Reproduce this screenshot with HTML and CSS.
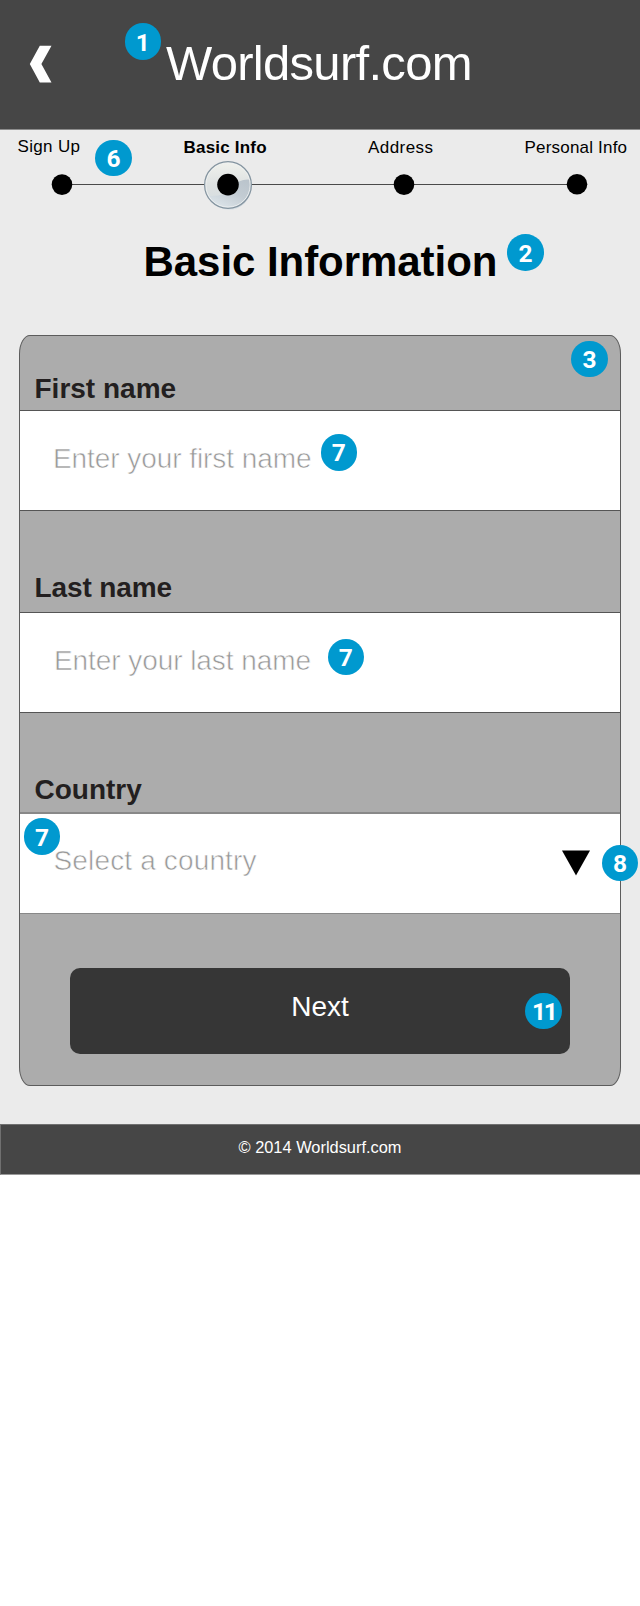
FILE: index.html
```html
<!DOCTYPE html>
<html lang="en">
<head>
<meta charset="utf-8">
<title>Worldsurf.com - Basic Information</title>
<link rel="stylesheet" href="styles.css">
</head>
<body>
<main class="screen">
  <header class="header">
    <svg class="back" width="22" height="38" viewBox="0 0 22 38"><path d="M9.800 .8H21.500L11.400 19.100 21.500 37.400H9.800L-.2 19.100Z" fill="#fff"/></svg>
    <div class="brand">Worldsurf.com</div>
  </header>
  <nav class="steps">
    <div class="step-labels">
      <span class="step first">Sign Up</span>
      <span class="step current">Basic Info</span>
      <span class="step address">Address</span>
      <span class="step">Personal Info</span>
    </div>
    <svg class="track" width="640" height="52" viewBox="0 0 640 52">
      <defs>
        <linearGradient id="glass" x1="0" y1="0" x2="0" y2="1">
          <stop offset="0" stop-color="#f1f2ed"/><stop offset=".5" stop-color="#dde1e1"/><stop offset="1" stop-color="#d5dce0"/>
        </linearGradient>
        <linearGradient id="shade" x1="1" y1="0" x2=".35" y2="1">
          <stop offset="0" stop-color="#b9c3cb"/><stop offset=".5" stop-color="#c3ccd3"/><stop offset="1" stop-color="#dde5ea"/>
        </linearGradient>
      </defs>
      <path d="M62 26.500H577" stroke="#4a4a4a"/>
      <circle cx="228" cy="27" r="23.400" fill="url(#glass)"/>
      <path d="M208.500 38Q226 39 233 29 238 21 249.300 21.500A22 22 0 0 1 208.500 38Z" fill="url(#shade)"/>
      <circle cx="228" cy="27" r="22.200" fill="none" stroke="#eef1f1" stroke-width=".9"/>
      <circle cx="228" cy="27" r="23.400" fill="none" stroke="#8494a0" stroke-width="1.200"/>
      <circle cx="62" cy="26.600" r="10.300"/><circle cx="228" cy="26.600" r="10.800"/><circle cx="404" cy="26.600" r="10.300"/><circle cx="577" cy="26.300" r="10.300"/>
    </svg>
  </nav>
  <h1 class="heading">Basic Information</h1>
  <form class="panel">
    <div class="label label-first">First name</div>
    <div class="field"><span class="hint">Enter your first name</span></div>
    <div class="label label-last">Last name</div>
    <div class="field field-last"><span class="hint">Enter your last name</span></div>
    <div class="label label-country">Country</div>
    <div class="field field-country"><span class="hint">Select a country</span>
      <svg class="arrow" width="28" height="26" viewBox="0 0 28 26"><path d="M0 .5H28L14 25.500Z"/></svg>
    </div>
    <div class="next">Next</div>
  </form>
  <footer class="footer">© 2014 Worldsurf.com</footer>
  <span class="badge b1">1</span>
  <span class="badge b6">6</span>
  <span class="badge b2">2</span>
  <span class="badge b3">3</span>
  <span class="badge b7a">7</span>
  <span class="badge b7b">7</span>
  <span class="badge b7c">7</span>
  <span class="badge b8">8</span>
  <span class="badge b11">11</span>
</main>
</body>
</html>
```
FILE: styles.css
```css
* { box-sizing: border-box; }
body { margin: 0; background: #fff; min-height: 1606px; font-family: "Liberation Sans", Arial, sans-serif; }
.screen { position: relative; width: 640px; height: 1175px; background: #ebebeb; color: #000; white-space: nowrap; overflow: hidden; }
.header { display: flex; align-items: center; height: 130px; padding: 0 0 4px 30px; background: #464646; border-bottom: 1px solid #8c8c8c; }
.back { flex: none; margin-top: 3px; overflow: visible; }
.brand { margin-left: 114px; font-size: 49px; line-height: 56px; letter-spacing: -.7px; color: #fff; }
.steps { height: 82px; padding-top: 8px; }
.step-labels { display: grid; grid-template-columns: 166px 184.500px 156.500px 116px; height: 20px; padding-left: 17.500px; }
.step { font-size: 17px; line-height: 20px; letter-spacing: .2px; }
.first { margin-top: -1px; letter-spacing: .35px; }
.address { letter-spacing: .45px; }
.current { font-weight: bold; }
.track { display: block; }
.heading { margin: 26px 0 0; padding-left: 143.500px; font-size: 42px; line-height: 48px; height: 97px; letter-spacing: -.05px; }
.panel { margin-left: 19px; width: 602px; height: 751px; background: #acacac; border: 1px solid #5c5c5c; border-radius: 11px / 19px; }
.label { display: flex; align-items: flex-end; padding-left: 14.500px; font-size: 28px; line-height: 32px; font-weight: bold; color: #231f20; }
.label-first { height: 74px; padding-bottom: 5px; }
.label-last { height: 101px; padding-bottom: 8px; letter-spacing: -.1px; }
.label-country { height: 99px; padding-bottom: 6px; }
.field { display: flex; align-items: center; justify-content: space-between; height: 101px; padding: 0 31px 3px 33px; background: #fff; border: solid #555; border-width: 1px 0; }
.field-last { padding-left: 34px; }
.field-country { height: 102px; padding: 0 30px 5px 33.500px; border-color: #888; border-width: 2px 0 1px; }
.hint { font-size: 28px; line-height: 32px; letter-spacing: -.07px; color: #999; -webkit-text-stroke: .6px #fff; }
.field-country .hint { letter-spacing: .15px; }
.arrow { margin-top: 4px; }
.next { display: flex; align-items: center; justify-content: center; width: 500px; height: 86px; margin: 54px 0 0 50px; padding-bottom: 9px; border-radius: 10px; background: #363636; color: #fff; font-size: 28px; line-height: 32px; }
.footer { display: flex; align-items: center; justify-content: center; height: 51px; margin-top: 38px; padding: 0 1px 6px 0; background: #464646; border: solid #707070; border-width: 1px 0 1px 1px; border-bottom-color: #999; color: #fff; font-size: 16.400px; line-height: 20px; }
.badge { position: absolute; display: flex; align-items: center; justify-content: center; width: 36.500px; height: 36.500px; padding-top: 2px; border-radius: 50%; background: #0099cf; color: #fff; font-family: Roboto, "Liberation Sans", sans-serif; font-size: 24.500px; line-height: 34px; font-weight: bold; }
.b1 { left: 124.500px; top: 23.300px; }
.b6 { left: 95.300px; top: 139.800px; }
.b2 { left: 507.400px; top: 234.300px; }
.b3 { left: 571.400px; top: 340.700px; }
.b7a { left: 320.500px; top: 434px; }
.b7b { left: 327.500px; top: 638.500px; }
.b7c { left: 23.800px; top: 818.300px; }
.b8 { left: 601.800px; top: 844.500px; }
.b11 { left: 525.400px; top: 992.700px; letter-spacing: -2.500px; }
```
